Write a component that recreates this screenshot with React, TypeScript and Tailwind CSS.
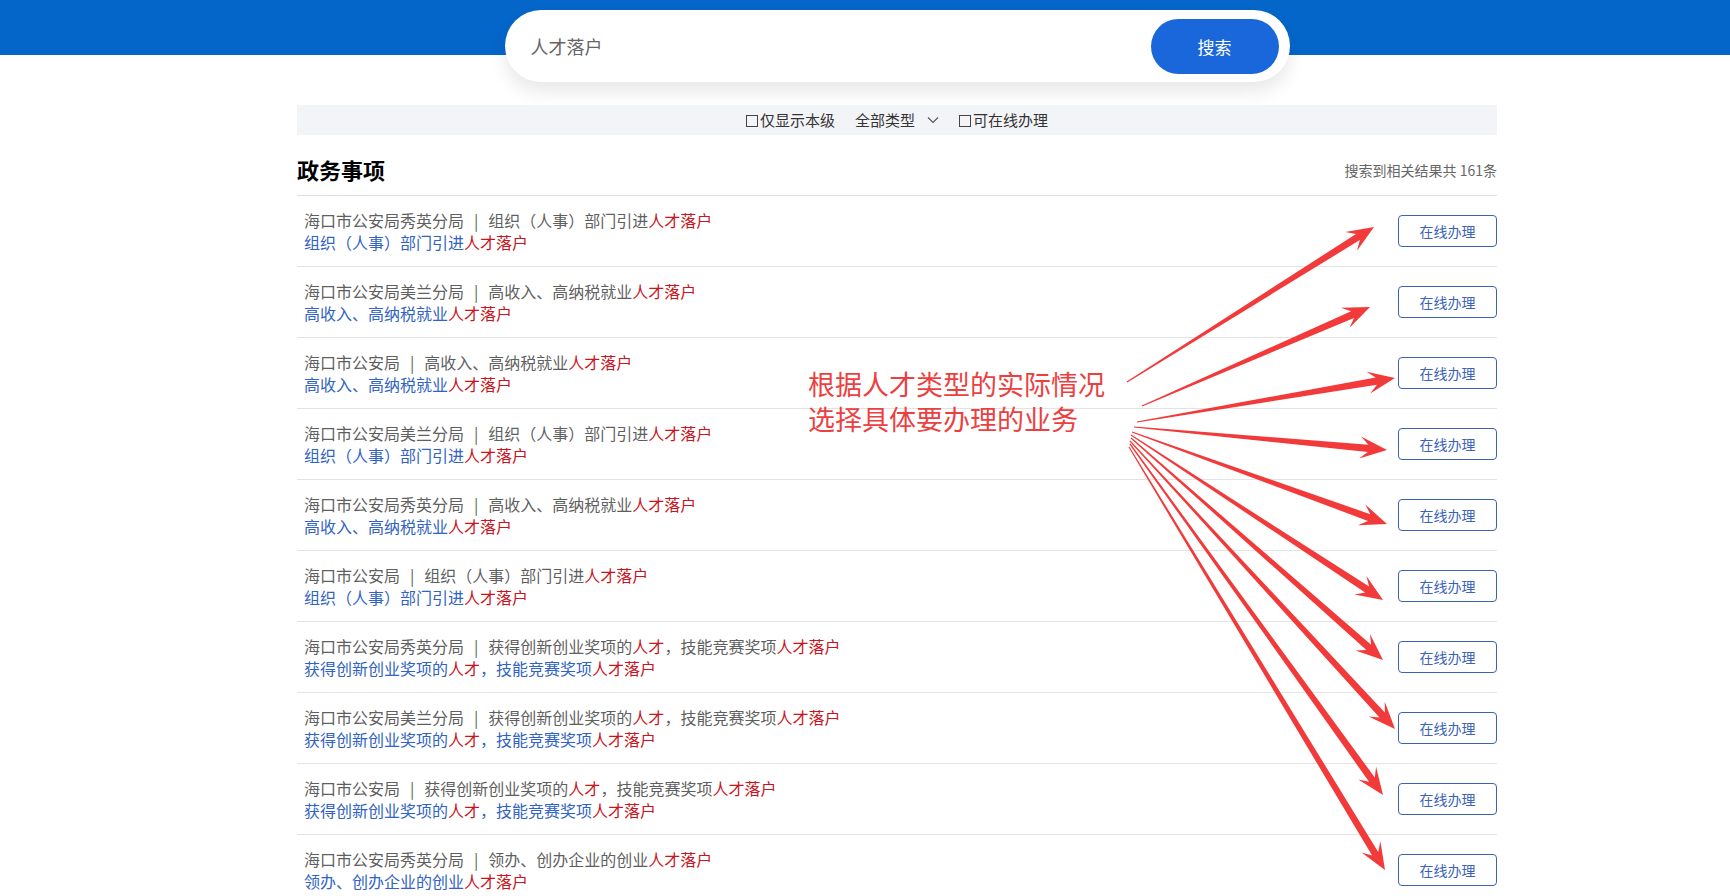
import React from 'react';

interface Item {
  dept: string;
  title: string;
}

const items: Item[] = [
  { dept: '海口市公安局秀英分局', title: '组织（人事）部门引进人才落户' },
  { dept: '海口市公安局美兰分局', title: '高收入、高纳税就业人才落户' },
  { dept: '海口市公安局', title: '高收入、高纳税就业人才落户' },
  { dept: '海口市公安局美兰分局', title: '组织（人事）部门引进人才落户' },
  { dept: '海口市公安局秀英分局', title: '高收入、高纳税就业人才落户' },
  { dept: '海口市公安局', title: '组织（人事）部门引进人才落户' },
  { dept: '海口市公安局秀英分局', title: '获得创新创业奖项的人才，技能竞赛奖项人才落户' },
  { dept: '海口市公安局美兰分局', title: '获得创新创业奖项的人才，技能竞赛奖项人才落户' },
  { dept: '海口市公安局', title: '获得创新创业奖项的人才，技能竞赛奖项人才落户' },
  { dept: '海口市公安局秀英分局', title: '领办、创办企业的创业人才落户' },
];

// [tailX, tailY, tipX, tipY]
const arrows: number[][] = [
  [1127, 382, 1374, 227],
  [1142, 406, 1370, 307],
  [1137, 422, 1395, 378],
  [1134, 427, 1387, 450],
  [1132, 432, 1387, 524],
  [1131, 435, 1383, 600],
  [1131, 438, 1383, 660],
  [1130, 441, 1395, 729],
  [1130, 444, 1383, 795],
  [1129, 447, 1385, 870],
];

const arrowPoints = ([x1, y1, x2, y2]: number[]) => {
  const dx = x2 - x1;
  const dy = y2 - y1;
  const len = Math.hypot(dx, dy);
  const ux = dx / len;
  const uy = dy / len;
  const nx = -uy;
  const ny = ux;
  const hl = 27;
  const hw = 11;
  const sw = 3.6;
  const neck = 19;
  const bx = x2 - ux * hl;
  const by = y2 - uy * hl;
  const kx = x2 - ux * neck;
  const ky = y2 - uy * neck;
  const pts = [
    [x1 + nx * 0.6, y1 + ny * 0.6],
    [kx + nx * sw, ky + ny * sw],
    [bx + nx * hw, by + ny * hw],
    [x2, y2],
    [bx - nx * hw, by - ny * hw],
    [kx - nx * sw, ky - ny * sw],
    [x1 - nx * 0.6, y1 - ny * 0.6],
  ];
  return pts.map((p) => `${p[0].toFixed(1)},${p[1].toFixed(1)}`).join(' ');
};

const Highlight: React.FC<{ text: string }> = ({ text }) => (
  <>
    {text.split(/(人才落户|人才)/).map((part, i) =>
      part === '人才落户' || part === '人才' ? (
        <span key={i} className="text-[#c8161e]">
          {part}
        </span>
      ) : (
        <span key={i}>{part}</span>
      )
    )}
  </>
);

const Box: React.FC = () => (
  <span className="inline-block w-[12px] h-[12px] border border-[#444] mr-[2px] translate-y-[1px]" />
);

export default function App() {
  return (
    <div
      className="relative w-[1730px] h-[896px] overflow-hidden bg-white bg-[linear-gradient(to_bottom,#0566c9_55px,#ffffff_55px)]"
      style={{ fontFamily: '"Noto Sans CJK SC", "Noto Sans", sans-serif' }}
    >
      <div className="ml-[297px] w-[1200px] pt-[10px]">
        {/* search */}
        <div className="mx-auto w-[785px] h-[72px] rounded-full bg-white shadow-[0_10px_18px_rgba(0,0,0,0.09)] flex items-center justify-between pl-[26px] pr-[11px]">
          <span className="text-[18px] text-[#666]">人才落户</span>
          <button className="w-[128px] h-[55px] rounded-full bg-[#1967da] text-white text-[17px] mt-[1px]">
            搜索
          </button>
        </div>

        {/* filters */}
        <div className="mt-[23px] h-[30px] bg-[#f3f4f8] flex items-center justify-center text-[15px] text-[#333]">
          <span className="flex items-center">
            <Box />
            仅显示本级
          </span>
          <span className="ml-[20px] flex items-center">
            全部类型
            <svg className="ml-[12px]" width="12" height="8" viewBox="0 0 12 8" fill="none">
              <path d="M1 1.5 L6 6.5 L11 1.5" stroke="#555" strokeWidth="1.1" />
            </svg>
          </span>
          <span className="ml-[20px] flex items-center">
            <Box />
            可在线办理
          </span>
        </div>

        {/* header */}
        <div className="h-[61px] pt-[8px] flex items-center justify-between border-b border-[#dedede]">
          <h2 className="text-[22px] font-bold text-black leading-[30px]">政务事项</h2>
          <span className="text-[14px] text-[#666] mt-[2px]">搜索到相关结果共 161条</span>
        </div>

        {/* list */}
        {items.map((item, i) => (
          <div
            key={i}
            className="h-[71px] pl-[7px] flex items-center justify-between border-b border-[#e3e3e3]"
          >
            <div className="text-[16px] leading-[22px]">
              <div className="text-[#5f5f5f]">
                {item.dept}
                <span className="px-[10px]">|</span>
                <Highlight text={item.title} />
              </div>
              <div className="text-[#3063c3]">
                <Highlight text={item.title} />
              </div>
            </div>
            <button className="w-[99px] h-[32px] rounded-[4px] border border-[#3a62b6] text-[#3a62b6] text-[14px]">
              在线办理
            </button>
          </div>
        ))}
      </div>

      {/* annotation */}
      <div className="absolute left-[808px] top-[366px] text-[27px] leading-[35px] text-[#ec3f3f]">
        <div>根据人才类型的实际情况</div>
        <div>选择具体要办理的业务</div>
      </div>

      <svg className="absolute left-0 top-0 pointer-events-none" width="1730" height="896">
        {arrows.map((a, i) => (
          <polygon key={i} points={arrowPoints(a)} fill="#f23a3a" />
        ))}
      </svg>
    </div>
  );
}
